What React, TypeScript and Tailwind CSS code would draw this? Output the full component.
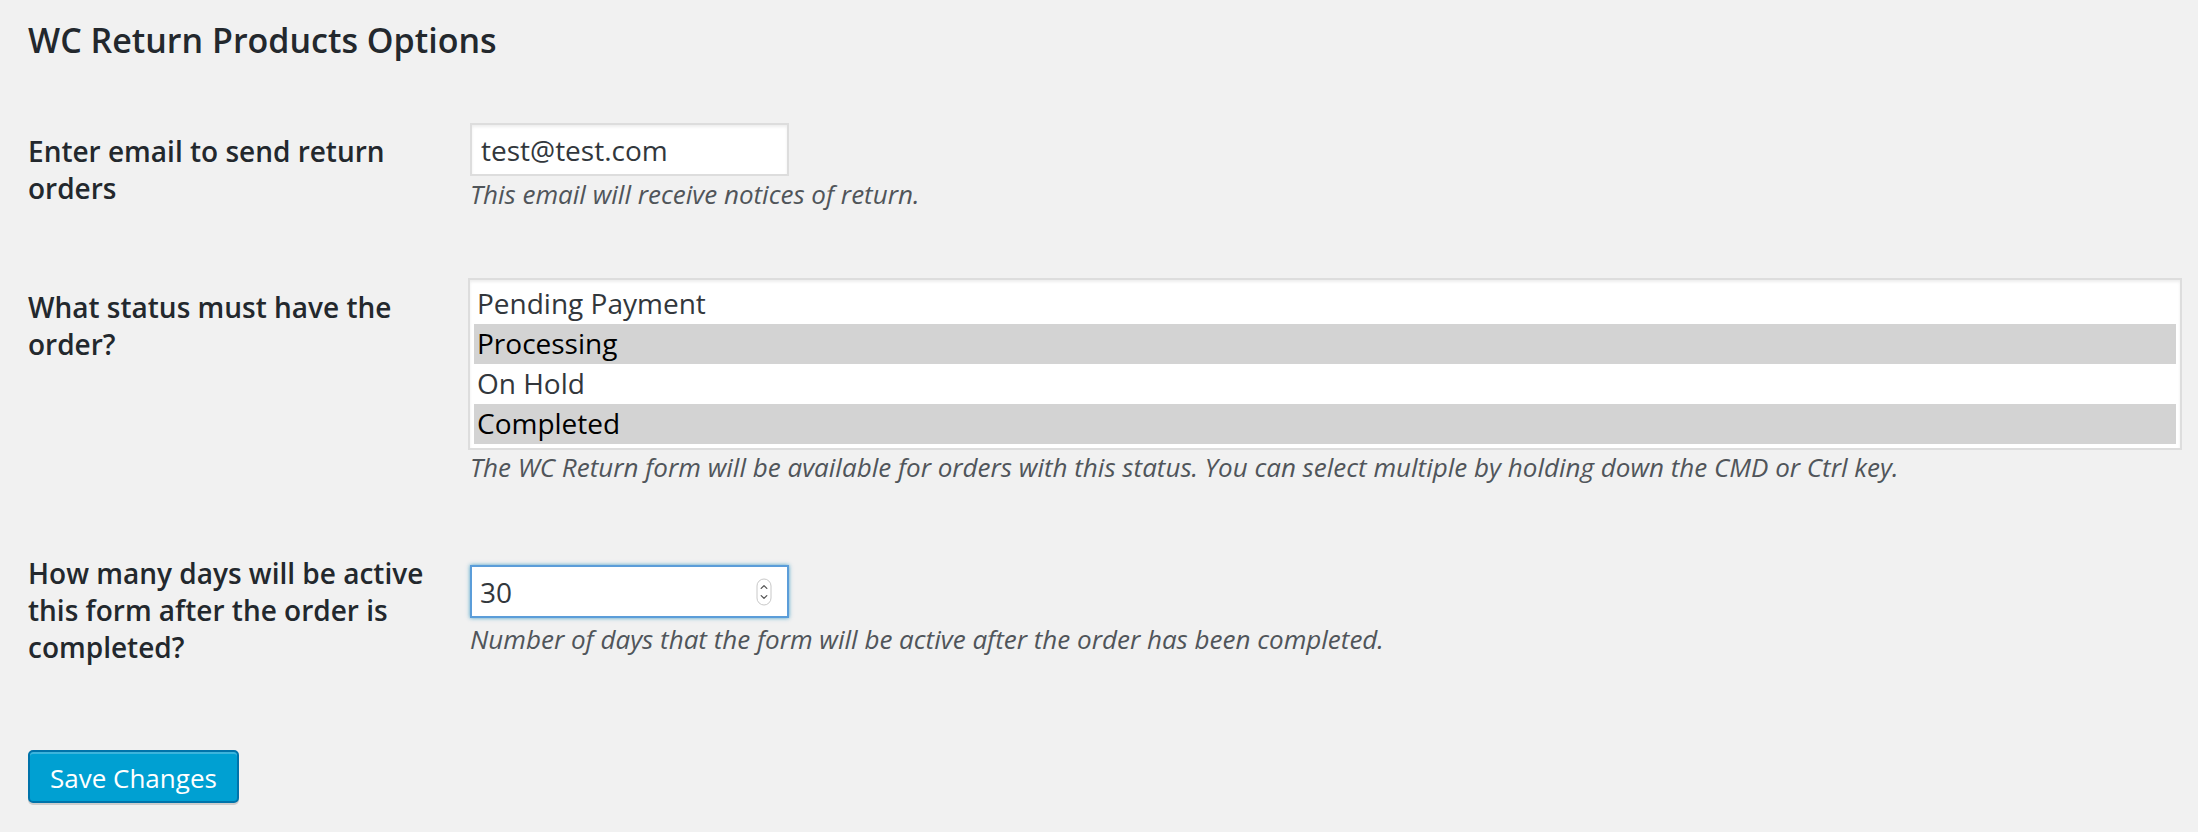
import React from "react";

const statuses = [
  { label: "Pending Payment", selected: false },
  { label: "Processing", selected: true },
  { label: "On Hold", selected: false },
  { label: "Completed", selected: true },
];

function Label({ children }: { children: React.ReactNode }) {
  return (
    <div className="self-start py-[41px] pr-[4px] text-[28px] leading-[37px] font-semibold">
      {children}
    </div>
  );
}

function Help({ children, className = "" }: { children: React.ReactNode; className?: string }) {
  return (
    <p className={`text-[26px] leading-[34px] italic text-[#50555a] ${className}`}>{children}</p>
  );
}

export default function App() {
  return (
    <main className="min-h-screen bg-[#f1f1f1] font-['Open_Sans',sans-serif] text-[#23282d]">
      <div className="pl-[28px] pr-[16px] pt-[18px]">
        <h1 className="text-[34px] leading-[44px] font-semibold">WC Return Products Options</h1>

        <div className="mt-[30px]">
          <div className="grid grid-cols-[442px_minmax(0,1fr)]">
            <Label>Enter email to send return orders</Label>
            <div className="self-center pt-[30px] pb-[36px]">
              <input
                type="email"
                readOnly
                defaultValue="test@test.com"
                className="block h-[53px] w-[319px] border-2 border-[#ddd] bg-white px-[9px] text-[28px] text-[#32373c] shadow-[inset_0_2px_3px_rgba(0,0,0,0.07)] outline-none"
              />
              <Help className="mt-[1px]">This email will receive notices of return.</Help>
            </div>
          </div>

          <div className="grid grid-cols-[442px_minmax(0,1fr)]">
            <Label>What status must have the order?</Label>
            <div className="self-center py-[30px]">
              <div
                role="listbox"
                aria-multiselectable="true"
                className="-ml-[2px] border-2 border-[#ddd] bg-white p-[4px] shadow-[inset_0_2px_3px_rgba(0,0,0,0.07)]"
              >
                {statuses.map((s) => (
                  <div
                    key={s.label}
                    role="option"
                    aria-selected={s.selected}
                    className={
                      s.selected
                        ? "h-[40px] bg-[#d3d3d3] px-[3px] text-[28px] leading-[38px] text-black"
                        : "h-[40px] px-[3px] text-[28px] leading-[38px] text-[#32373c]"
                    }
                  >
                    {s.label}
                  </div>
                ))}
              </div>
              <Help>
                The WC Return form will be available for orders with this status. You can select multiple by holding
                down the CMD or Ctrl key.
              </Help>
            </div>
          </div>

          <div className="grid grid-cols-[442px_minmax(0,1fr)]">
            <Label>How many days will be active this form after the order is completed?</Label>
            <div className="self-center py-[30px]">
              <div className="flex h-[53px] w-[319px] items-center border-2 border-[#5b9dd9] bg-white pl-[8px] pr-[15px] shadow-[0_0_4px_rgba(30,140,190,0.8)]">
                <input
                  type="text"
                  readOnly
                  defaultValue="30"
                  className="min-w-0 flex-1 bg-transparent text-[28px] text-[#32373c] outline-none"
                />
                <svg width="16" height="28" viewBox="0 0 16 28" className="shrink-0">
                  <rect x="1" y="1" width="14" height="26" rx="7" fill="#fff" stroke="#c8c8c8" />
                  <path d="M5.2 10.4 L8 7.6 L10.8 10.4" fill="none" stroke="#555" strokeWidth="1.3" strokeLinecap="round" strokeLinejoin="round" />
                  <path d="M5.2 17.6 L8 20.4 L10.8 17.6" fill="none" stroke="#555" strokeWidth="1.3" strokeLinecap="round" strokeLinejoin="round" />
                </svg>
              </div>
              <Help className="mt-[4px]">
                Number of days that the form will be active after the order has been completed.
              </Help>
            </div>
          </div>
        </div>

        <button
          type="button"
          className="mt-[43px] h-[53px] rounded-[5px] border-2 border-[#0073aa] bg-[#00a0d2] px-[20px] pt-[2px] text-[26px] leading-[46px] text-white shadow-[inset_0_2px_0_rgba(120,200,230,0.5),0_2px_0_rgba(0,0,0,0.15)]"
        >
          Save Changes
        </button>
      </div>
    </main>
  );
}
